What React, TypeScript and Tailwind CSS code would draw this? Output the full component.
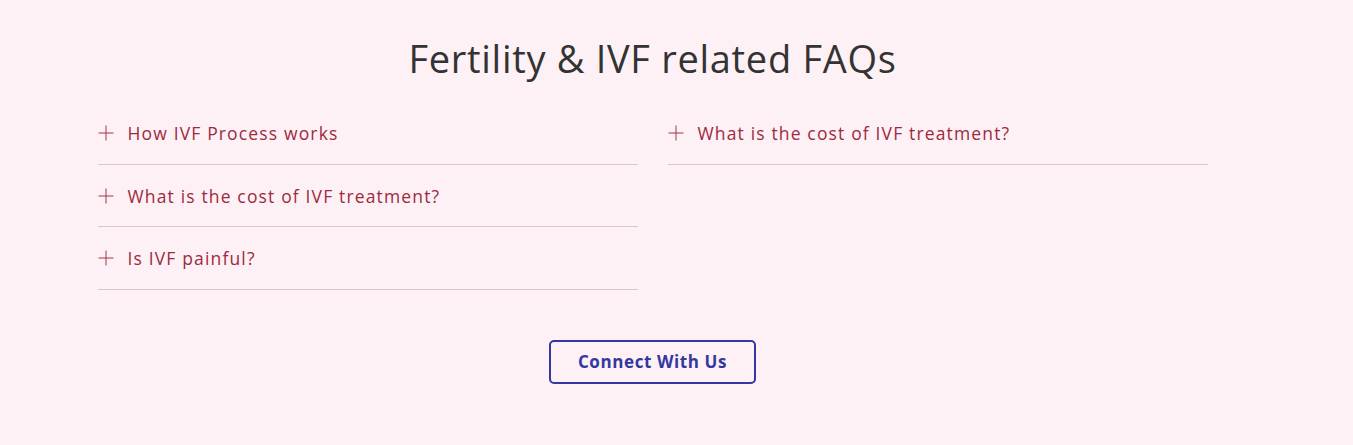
import React from "react";

const Plus = () => (
  <svg width="16" height="16" viewBox="0 0 16 16" className="shrink-0 text-[#a3354a]">
    <path d="M8 0.5V15.5M0.5 8H15.5" stroke="currentColor" strokeWidth="1" fill="none" />
  </svg>
);

const Item = ({ q }: { q: string }) => (
  <div className="flex items-center gap-[14px] h-[62.5px] border-b border-[#d9c7cc] pt-[1px]">
    <Plus />
    <span className="text-[17.5px] text-[#9e2a40] tracking-[1.15px]">{q}</span>
  </div>
);

export default function App() {
  return (
    <div
      className="w-full min-h-[445px] bg-[#fdf1f5]"
      style={{ fontFamily: '"Open Sans", "Noto Sans", sans-serif' }}
    >
      <div className="w-[1305px] flex flex-col items-center">
        <h1 className="text-[38px] text-[#333333] mt-[30px] leading-[56px] font-normal tracking-[0.7px]">
          Fertility &amp; IVF related FAQs
        </h1>
        <div className="w-[1110px] grid grid-cols-2 gap-x-[30px] mt-[16px]">
          <div className="flex flex-col">
            <Item q="How IVF Process works" />
            <Item q="What is the cost of IVF treatment?" />
            <Item q="Is IVF painful?" />
          </div>
          <div className="flex flex-col">
            <Item q="What is the cost of IVF treatment?" />
          </div>
        </div>
        <button className="mt-[50px] w-[207px] h-[44px] border-2 border-[#3338a0] rounded-[5px] text-[#3338a0] font-bold text-[17px] tracking-[0.6px]">
          Connect With Us
        </button>
      </div>
    </div>
  );
}
